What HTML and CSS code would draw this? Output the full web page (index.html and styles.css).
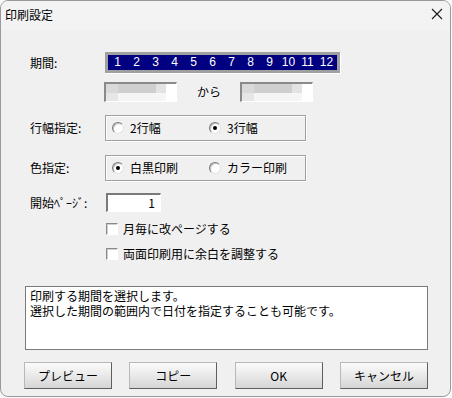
FILE: index.html
```html
<!DOCTYPE html>
<html lang="ja">
<head>
<meta charset="utf-8">
<link rel="stylesheet" href="styles.css">
</head>
<body>
<div class="window">
  <div class="titlebar">
    <span class="title">印刷設定</span>
    <svg class="close" width="12" height="12" viewBox="0 0 12 12"><path d="M1 1 L11 11 M11 1 L1 11" stroke="#1a1a1a" stroke-width="1.1" fill="none"/></svg>
  </div>
  <div class="body">
    <div class="row r-period">
      <span class="label">期間:</span>
      <div class="months">
        <span>1</span><span>2</span><span>3</span><span>4</span><span>5</span><span>6</span><span>7</span><span>8</span><span>9</span><span>10</span><span>11</span><span>12</span>
      </div>
    </div>
    <div class="row r-range">
      <span class="label"></span>
      <div class="range">
        <div class="datebox"><div class="blur-top"></div><div class="blur-bot"></div></div>
        <span class="from">から</span>
        <div class="datebox"><div class="blur-top"></div><div class="blur-bot"></div></div>
      </div>
    </div>
    <div class="row r-lines">
      <span class="label">行幅指定:</span>
      <div class="group">
        <span class="opt"><i class="radio"></i>2行幅</span>
        <span class="opt"><i class="radio on"></i>3行幅</span>
      </div>
    </div>
    <div class="row r-color">
      <span class="label">色指定:</span>
      <div class="group">
        <span class="opt"><i class="radio on"></i>白黒印刷</span>
        <span class="opt"><i class="radio"></i>カラー印刷</span>
      </div>
    </div>
    <div class="row r-page">
      <span class="label">開始ﾍﾟｰｼﾞ:</span>
      <div class="pagebox">1</div>
    </div>
    <div class="r-check">
      <span class="box"></span><span class="chk-text">月毎に改ページする</span>
    </div>
    <div class="r-check">
      <span class="box"></span><span class="chk-text">両面印刷用に余白を調整する</span>
    </div>
    <div class="memo">印刷する期間を選択します。<br>選択した期間の範囲内で日付を指定することも可能です。</div>
    <div class="buttons">
      <button class="btn">プレビュー</button>
      <button class="btn">コピー</button>
      <button class="btn">OK</button>
      <button class="btn">キャンセル</button>
    </div>
  </div>
</div>
</body>
</html>
```
FILE: styles.css
```css
* { box-sizing: border-box; }
html, body {
  margin: 0;
  padding: 0;
  background: #fbfbfb;
  font-family: "Noto Sans CJK JP", "Noto Sans", sans-serif;
  font-size: 12px;
  line-height: 14px;
  color: #000;
}
.window {
  width: 451px;
  height: 397px;
  border: 1px solid #9a9a9a;
  border-radius: 8px;
  background: #f0f0f0;
  overflow: hidden;
}
.titlebar {
  height: 29px;
  background: #f3f3f3;
  display: flex;
  align-items: center;
  justify-content: space-between;
  padding: 0 7px 1px 4px;
}
.title { font-size: 12px; }
.close { display: block; margin-top: -2px; }
.body { padding: 0; }
.row {
  display: grid;
  grid-template-columns: 75px auto;
  align-items: center;
  padding-left: 29px;
}
.label { white-space: nowrap; }
.r-period { margin-top: 22px; height: 21px; }
.r-range { margin-top: 9px; height: 20px; }
.r-lines { margin-top: 13px; height: 26px; }
.r-color { margin-top: 14px; height: 26px; }
.r-page { margin-top: 12px; height: 19px; }

.months {
  width: 235px;
  height: 21px;
  border: 3px solid #a0a0a0;
  box-shadow: 1px 1px 0 #ffffff;
  background: #000080;
  display: grid;
  grid-template-columns: repeat(12, 19px);
  align-items: center;
  color: #fff;
  font-family: "Liberation Sans", Arial, sans-serif;
  font-size: 12px;
  line-height: 15px;
}
.months span { text-align: center; }

.range {
  display: flex;
  align-items: center;
  margin-left: -1px;
}
.datebox {
  width: 73px;
  height: 20px;
  border-style: solid;
  border-width: 2px 1px 1px 2px;
  border-color: #8a8a8a #ffffff #ffffff #8a8a8a;
  background: #fff;
  display: flex;
  flex-direction: column;
}
.blur-top {
  height: 9px;
  background: linear-gradient(to right, #d9d9d9 0 17%, #cfcfcf 17% 72%, #e3e3e3 72% 86%, #fff 86%);
}
.blur-bot {
  flex: 1;
  background: linear-gradient(to right, #e6e6e6 0 17%, #f5f5f5 17% 86%, #fff 86%);
}
.from { margin: 0 19px 0 20px; }

.group {
  width: 201px;
  height: 26px;
  border: 1px solid #a0a0a0;
  box-shadow: inset 1px 1px 0 #ffffff, 1px 1px 0 #ffffff;
  display: grid;
  grid-template-columns: 97px auto;
  align-items: center;
  padding-left: 6px;
}
.opt { display: flex; align-items: center; white-space: nowrap; }
.radio {
  width: 12px;
  height: 12px;
  border-radius: 50%;
  border: 1px solid;
  border-color: #7a7a7a #e3e3e3 #e3e3e3 #7a7a7a;
  background: #fff;
  box-shadow: inset 1px 1px 0 #c0c0c0;
  margin-right: 6px;
  position: relative;
  display: inline-block;
}
.radio.on::after {
  content: "";
  position: absolute;
  left: 3px;
  top: 3px;
  width: 4px;
  height: 4px;
  border-radius: 50%;
  background: #000;
}

.pagebox {
  width: 55px;
  height: 19px;
  margin-left: 1px;
  border-style: solid;
  border-width: 2px 1px 1px 2px;
  border-color: #7a7a7a #ffffff #ffffff #7a7a7a;
  background: #fff;
  text-align: right;
  padding-right: 5px;
  line-height: 15px;
}

.r-check {
  margin-top: 9px;
  height: 16px;
  display: flex;
  align-items: center;
  padding-left: 105px;
  white-space: nowrap;
}
.box {
  flex: none;
  width: 12px;
  height: 12px;
  border-style: solid;
  border-width: 1px;
  border-color: #8a8a8a #ffffff #ffffff #8a8a8a;
  box-shadow: inset 1px 1px 0 #d0d0d0;
  background: #fff;
  margin-right: 5px;
}

.memo {
  margin: 24px 0 0 24px;
  width: 403px;
  height: 64px;
  border: 1px solid #7a7a7a;
  background: #fff;
  padding: 1px 4px;
  line-height: 15px;
}

.buttons {
  margin: 12px 0 0 23px;
  width: 404px;
  display: flex;
  justify-content: space-between;
}
.btn {
  width: 88px;
  height: 27px;
  font-family: inherit;
  font-size: 12px;
  color: #000;
  border: 1px solid;
  border-color: #b8b8b8 #5e5e5e #5e5e5e #b8b8b8;
  background: linear-gradient(to bottom, #fbfbfb 0%, #ebebeb 45%, #d5d5d5 100%);
  padding: 0;
  line-height: 14px;
}
```
